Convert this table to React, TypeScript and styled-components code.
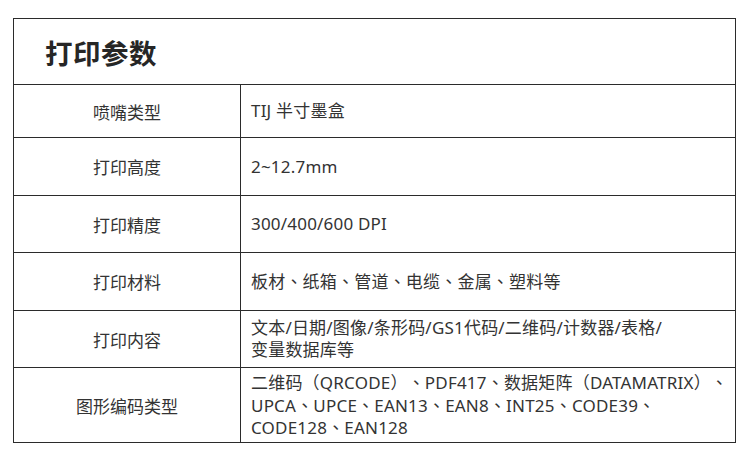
import React from "react";
import styled, { createGlobalStyle } from "styled-components";

const Global = createGlobalStyle`
  html, body { margin: 0; padding: 0; background: #ffffff; }
  body {
    font-family: "Noto Sans", "Noto Sans CJK SC", sans-serif;
    color: #333333;
  }
`;

const Page = styled.div`
  width: 750px;
  height: 466px;
  box-sizing: border-box;
  padding: 18px 14px 0 13px;
  background: #ffffff;
`;

const Table = styled.div`
  border: 1px solid #2b2b2b;
  border-bottom: none;
  display: flex;
  flex-direction: column;
`;

const TitleRow = styled.div`
  height: 66px;
  box-sizing: border-box;
  border-bottom: 1px solid #2b2b2b;
  display: flex;
  align-items: center;
  padding-left: 31px;
  font-family: "Noto Sans CJK SC", sans-serif;
  font-size: 27.5px;
  font-weight: 700;
  color: #262626;
  letter-spacing: 0.5px;
`;

const Row = styled.div<{ $h: number }>`
  height: ${(p) => p.$h}px;
  box-sizing: border-box;
  border-bottom: 1px solid #2b2b2b;
  display: grid;
  grid-template-columns: 227px 1fr;
`;

const Label = styled.div`
  border-right: 1px solid #2b2b2b;
  display: flex;
  align-items: center;
  justify-content: center;
  font-family: "Noto Sans CJK SC", sans-serif;
  font-size: 17px;
  color: #333333;
`;

const Value = styled.div`
  display: flex;
  flex-direction: column;
  justify-content: center;
  padding-left: 10px;
  font-size: 17px;
  line-height: 21.7px;
  letter-spacing: 0.2px;
  text-spacing-trim: space-all;
  color: #333333;
`;

const Line = styled.span`
  white-space: pre;
`;

const Punct = styled.span`
  font-family: "Noto Sans CJK TC", "Noto Sans CJK SC", sans-serif;
`;

const renderLine = (text: string) =>
  text.split(/([、（）])/).map((part, i) =>
    /^[、（）]$/.test(part) ? <Punct key={i}>{part}</Punct> : part
  );

const rows: { label: string; lines: string[]; h: number }[] = [
  { label: "喷嘴类型", lines: ["TIJ 半寸墨盒"], h: 53 },
  { label: "打印高度", lines: ["2~12.7mm"], h: 58 },
  { label: "打印精度", lines: ["300/400/600 DPI"], h: 57 },
  { label: "打印材料", lines: ["板材、纸箱、管道、电缆、金属、塑料等"], h: 58 },
  {
    label: "打印内容",
    lines: ["文本/日期/图像/条形码/GS1代码/二维码/计数器/表格/", "变量数据库等"],
    h: 57,
  },
  {
    label: "图形编码类型",
    lines: [
      "二维码（QRCODE）、PDF417、数据矩阵（DATAMATRIX）、",
      "UPCA、UPCE、EAN13、EAN8、INT25、CODE39、",
      "CODE128、EAN128",
    ],
    h: 75,
  },
];

export default function App() {
  return (
    <Page>
      <Global />
      <Table>
        <TitleRow>打印参数</TitleRow>
        {rows.map((r) => (
          <Row key={r.label} $h={r.h}>
            <Label>{r.label}</Label>
            <Value>
              {r.lines.map((l) => (
                <Line key={l}>{renderLine(l)}</Line>
              ))}
            </Value>
          </Row>
        ))}
      </Table>
    </Page>
  );
}
